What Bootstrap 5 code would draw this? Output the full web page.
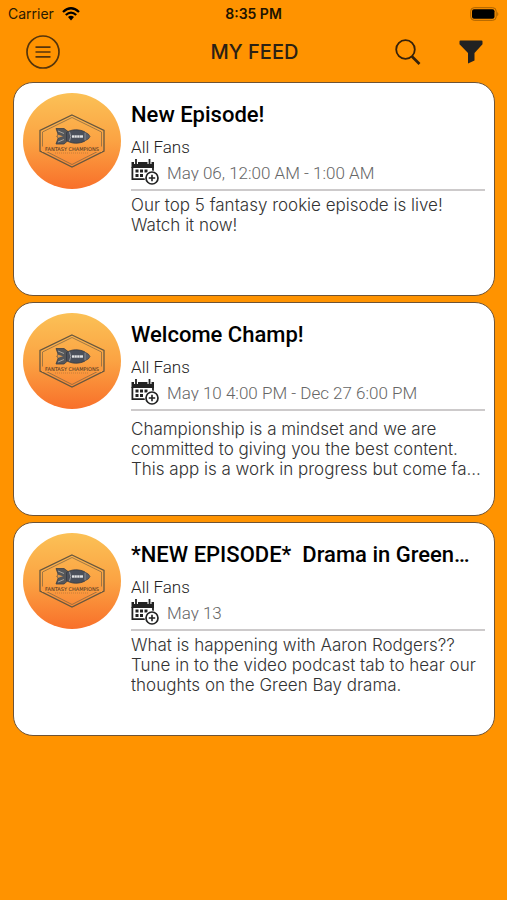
<!DOCTYPE html>
<html lang="en">
<head>
<meta charset="utf-8">
<meta name="viewport" content="width=device-width, initial-scale=1">
<title>My Feed</title>
<link rel="stylesheet" href="https://cdn.jsdelivr.net/npm/bootstrap@5.3.0/dist/css/bootstrap.min.css">
<style>
  body { background: #ff9300; font-family: Inter, "Liberation Sans", sans-serif; color: #1e1e1e; }
  .status-bar { height: 28px; font-size: 14px; line-height: 28px; padding: 0 8px; color: #2a1a00; }
  .status-bar > *, .app-bar > * { flex: 1 1 0; }
  .status-time { font-weight: 600; color: #201300; }
  .app-bar { height: 48px; padding: 0 24px 0 26px; }
  .app-title { font-size: 20px; line-height: 24px; font-weight: 500; color: #2b2114; }
  .icon-button { background: none; border: 0; padding: 0; line-height: 0; color: #222; }
  .icon-gap { gap: 38px; }
  .feed { gap: 6px; padding: 6px 12px 16px 13px; }
  .feed-card { min-height: 214px; border: 1px solid #6e5335; border-radius: 20px; padding: 10px 9px; gap: 10px; }
  .feed-text { font-family: Roboto, sans-serif; }
  .feed-title { font-size: 22px; line-height: 26px; font-weight: 500; color: #000; margin: 9px 0; white-space: pre; }
  .audience { font-size: 17px; line-height: 20px; font-weight: 300; color: #222; }
  .when { height: 30px; gap: 8px; }
  .when-text { font-size: 17px; line-height: 20px; height: 18px; font-weight: 300; color: #666; }
  .rule { height: 2px; background: #cdcacb; margin: 2px 0 4px; }
  .message { font-family: Inter, "Liberation Sans", sans-serif; font-size: 17px; font-weight: 300; line-height: 20px; color: #333; margin: 0; }
  .message-full { padding-top: 4px; }
</style>
<script src="https://cdn.jsdelivr.net/npm/bootstrap@5.3.0/dist/js/bootstrap.bundle.min.js"></script>
</head>
<body>
<svg width="0" height="0" class="position-absolute" aria-hidden="true">
  <defs>
    <linearGradient id="sunset" x1="0" y1="0" x2="0" y2="1">
      <stop offset="0" stop-color="#fbc156"/><stop offset=".5" stop-color="#fba343"/><stop offset="1" stop-color="#f8702a"/>
    </linearGradient>
    <symbol id="logo" viewBox="0 0 98 96">
      <ellipse cx="49" cy="48" rx="49" ry="48" fill="url(#sunset)"/>
      <path d="M49 22 81 37.500V58L49 74 17 58V37.500z" fill="none" stroke="#66573f" stroke-width="1.300"/>
      <path d="M49 24.500 78.500 39V56.500L49 71.500 19.500 56.500V39z" fill="none" stroke="#7a6242" stroke-width=".7"/>
      <path d="M33 35.500h8l4 3v9l-4 3.500h-8l2-5.500-1-2 1-2.500z" fill="#55575a" stroke="#3a3e46" stroke-width=".8"/>
      <path d="M35 38l6 2.500M35 49l6-2.500" fill="none" stroke="#a9a49a" stroke-width="1"/>
      <path d="M34.500 41.500 40 43.200l-5.500 1.800z" fill="#e09a4c"/>
      <path d="M43.500 39.500c5-3.500 13-3.500 18.500-.5v9c-5.500 3-13.500 3-18.500-.5z" fill="#4b505a" stroke="#343941" stroke-width=".8"/>
      <path d="M62 39.200q4 1.500 5 4.300-1 2.800-5 4.300z" fill="#5d6068" stroke="#3a3e46" stroke-width=".7"/>
      <path d="M46.500 38.800q2.500 4.700 0 9.400M62 39.500v8" fill="none" stroke="#a3a5a8" stroke-width=".9"/>
      <path d="M49 43.500h11" stroke="#e4e4e4" stroke-width="2.400"/>
      <path d="M51.500 42v3m2.500-3v3m2.500-3v3" stroke="#777b82" stroke-width=".6"/>
      <rect x="19" y="53.500" width="60" height="5.500" fill="#f99a3e"/>
      <text x="49" y="58" text-anchor="middle" font-family="DejaVu Sans" font-size="5" fill="#3f2f22">FANTASY CHAMPIONS</text>
      <path d="M32 60h34" stroke="#a66835" stroke-width=".6" stroke-dasharray="1 1"/>
    </symbol>
    <symbol id="calendar" viewBox="0 0 28 28">
      <path d="M.5 4h22.500v6H.5z" fill="#222"/>
      <path d="M5 1v5M18.500 1v5" stroke="#fff" stroke-width="4"/>
      <path d="M5 1v5M18.500 1v5" stroke="#222" stroke-width="1.800"/>
      <path d="M1.400 9v12.200H14M22 9v4" fill="none" stroke="#222" stroke-width="1.800"/>
      <path d="M4.500 11.500h3v3h-3zm4.500 0h3v3H9zm4.500 0h3v3h-3zM4.500 16h3v3h-3zM9 16h3v3H9z" fill="#222"/>
      <circle cx="21" cy="20" r="7.500" fill="#fff"/>
      <circle cx="21" cy="20" r="6" fill="#fff" stroke="#222" stroke-width="1.700"/>
      <path d="M21 16.800v6.400M17.800 20h6.400" stroke="#222" stroke-width="1.600"/>
    </symbol>
  </defs>
</svg>

<div class="status-bar d-flex align-items-center">
  <div class="d-flex align-items-center gap-2"><span>Carrier</span>
    <svg width="18" height="14" viewBox="0 0 18 14" aria-label="Wi-Fi"><g fill="none" stroke="#000" stroke-width="2.300"><path d="M1 5q8-7.500 16 0"/><path d="M3.800 8q5.200-4.800 10.400 0"/></g><path d="M6 10q3-2.600 6 0l-3 3.600z"/></svg>
  </div>
  <div class="status-time text-center">8:35 PM</div>
  <div class="d-flex justify-content-end">
    <svg width="30" height="14" viewBox="0 0 30 14" aria-label="Battery"><rect x="1.700" y=".7" width="25.500" height="12.600" rx="3.500" fill="none" stroke="#a96200"/><rect x="3" y="2.300" width="22.500" height="9.400" rx="2"/><path d="M28.300 4.700q2 2.300 0 4.600z" fill="#a96200"/></svg>
  </div>
</div>

<header class="app-bar d-flex align-items-center">
  <div>
    <button class="icon-button" type="button" aria-label="Menu">
      <svg width="34" height="34" viewBox="0 0 34 34" fill="none" stroke="#55350b" stroke-width="1.700"><circle cx="17" cy="17" r="16"/><path d="M9.500 12.200h15M9.500 17h15M9.500 21.800h15"/></svg>
    </button>
  </div>
  <h1 class="app-title text-center mb-0">MY FEED</h1>
  <div class="d-flex justify-content-end align-items-center icon-gap">
    <button class="icon-button" type="button" aria-label="Search">
      <svg width="26" height="26" viewBox="0 0 26 26" fill="none" stroke="#35210a"><circle cx="10.500" cy="10.500" r="9.300" stroke-width="1.800"/><path d="M17 17.500 24.500 25" stroke-width="2.600"/></svg>
    </button>
    <button class="icon-button" type="button" aria-label="Filter">
      <svg width="24" height="24" viewBox="0 0 24 24" fill="#222"><path d="M1.500.5h21q1 0 1 1v2.700L15.500 13v7.500L9 23.500V13L.5 4.200V1.500q0-1 1-1z"/></svg>
    </button>
  </div>
</header>

<main class="feed d-flex flex-column">
  <article class="feed-card bg-white d-flex align-items-start">
    <svg class="flex-shrink-0" width="98" height="96" role="img" aria-label="Fantasy Champions"><use href="#logo"/></svg>
    <div class="feed-text flex-grow-1 overflow-hidden">
      <h2 class="feed-title text-truncate">New Episode!</h2>
      <div class="audience">All Fans</div>
      <div class="when d-flex align-items-center"><svg width="28" height="28" aria-hidden="true"><use href="#calendar"/></svg><span class="when-text overflow-hidden">May 06, 12:00 AM - 1:00 AM</span></div>
      <div class="rule"></div>
      <p class="message">Our top 5 fantasy rookie episode is live!<br>Watch it now!</p>
    </div>
  </article>

  <article class="feed-card bg-white d-flex align-items-start">
    <svg class="flex-shrink-0" width="98" height="96" role="img" aria-label="Fantasy Champions"><use href="#logo"/></svg>
    <div class="feed-text flex-grow-1 overflow-hidden">
      <h2 class="feed-title text-truncate">Welcome Champ!</h2>
      <div class="audience">All Fans</div>
      <div class="when d-flex align-items-center"><svg width="28" height="28" aria-hidden="true"><use href="#calendar"/></svg><span class="when-text overflow-hidden">May 10 4:00 PM - Dec 27 6:00 PM</span></div>
      <div class="rule"></div>
      <p class="message message-full">Championship is a mindset and we are<br>committed to giving you the best content.<br>This app is a work in progress but come fa...</p>
    </div>
  </article>

  <article class="feed-card bg-white d-flex align-items-start">
    <svg class="flex-shrink-0" width="98" height="96" role="img" aria-label="Fantasy Champions"><use href="#logo"/></svg>
    <div class="feed-text flex-grow-1 overflow-hidden">
      <h2 class="feed-title">*NEW EPISODE*&nbsp; Drama in Green…</h2>
      <div class="audience">All Fans</div>
      <div class="when d-flex align-items-center"><svg width="28" height="28" aria-hidden="true"><use href="#calendar"/></svg><span class="when-text overflow-hidden">May 13</span></div>
      <div class="rule"></div>
      <p class="message">What is happening with Aaron Rodgers??<br>Tune in to the video podcast tab to hear our<br>thoughts on the Green Bay drama.</p>
    </div>
  </article>
</main>
</body>
</html>
